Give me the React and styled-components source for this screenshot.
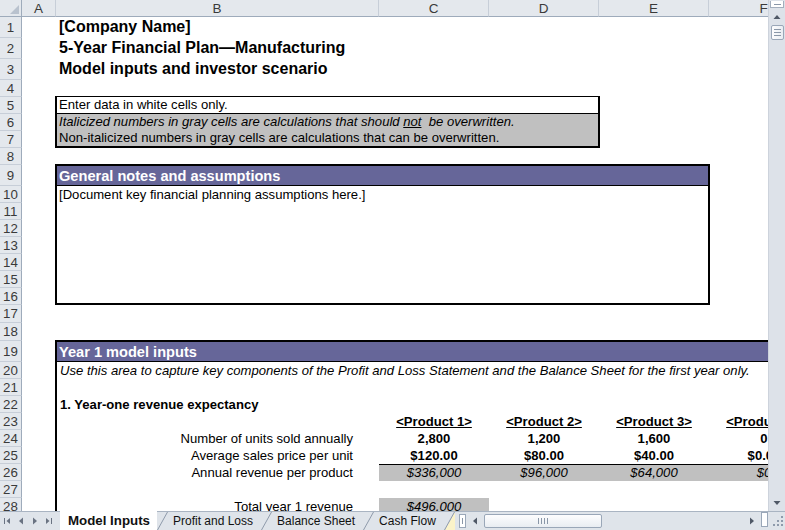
import React from "react";
import styled, { createGlobalStyle, css } from "styled-components";

const GlobalStyle = createGlobalStyle`
  html, body { margin: 0; padding: 0; background: #fff; }
  body { font-family: "Liberation Sans", Arial, sans-serif; color: #000; }
`;

// sheet geometry, taken from the screenshot
const ROW_TEMPLATE =
  "17px 21px 21px 21px repeat(5, 17px) 21px repeat(7, 17px) 18px 18px 21px repeat(9, 17px)";
const COLS = ["A", "B", "C", "D", "E", "F"];
const ROWS = Array.from({ length: 28 }, (_, i) => i + 1);
const BODY = "13.1px";

const products = [
  { name: "<Product 1>", units: "2,800", price: "$120.00", revenue: "$336,000" },
  { name: "<Product 2>", units: "1,200", price: "$80.00", revenue: "$96,000" },
  { name: "<Product 3>", units: "1,600", price: "$40.00", revenue: "$64,000" },
  { name: "<Product 4>", units: "0", price: "$0.00", revenue: "$0" },
];

const Window = styled.div`
  width: 785px;
  height: 530px;
  overflow: hidden;
  display: flex;
  flex-direction: column;
  background: #fff;
`;

const Main = styled.div`
  display: flex;
  height: 511px;
`;

const Sheet = styled.div`
  width: 768px;
  height: 511px;
  overflow: hidden;
  display: grid;
  grid-template-columns: 22px 34px 323px 110px 110px 110px 110px;
  grid-template-rows: ${ROW_TEMPLATE};
  align-content: start;
  justify-content: start;
`;

const HeadBase = css`
  background: #e4e8ed;
  color: #3a3a3a;
  font-size: 13.5px;
  display: flex;
  align-items: center;
  justify-content: center;
  box-sizing: border-box;
`;

const Corner = styled.div`
  ${HeadBase};
  grid-column: 1;
  grid-row: 1;
  border-bottom: 1px solid #9eabbb;
  border-right: 1px solid #9eabbb;
  justify-content: flex-end;
  align-items: flex-end;
  padding: 0 2px 2px 0;
`;

const ColHead = styled.div`
  ${HeadBase};
  grid-row: 1;
  grid-column: ${(p) => p.$col};
  border-bottom: 1px solid #9eabbb;
  border-right: 1px solid #c7ced8;
`;

const RowHead = styled.div`
  ${HeadBase};
  grid-column: 1;
  grid-row: ${(p) => p.$row};
  border-bottom: 1px solid #c7ced8;
  border-right: 1px solid #9eabbb;
  font-size: 13.3px;
`;

const Cell = styled.div`
  grid-column: ${(p) => p.$col};
  grid-row: ${(p) => p.$row};
  display: flex;
  align-items: flex-end;
  justify-content: ${(p) => (p.$align === "right" ? "flex-end" : p.$align === "center" ? "center" : "flex-start")};
  padding: ${(p) => (p.$align === "right" ? "0 26px 1px 0" : p.$align === "center" ? "0 0 1px" : "0 0 1px 3px")};
  font-size: ${BODY};
  font-weight: ${(p) => (p.$bold ? "bold" : "normal")};
  font-style: ${(p) => (p.$italic ? "italic" : "normal")};
  text-decoration: ${(p) => (p.$underline ? "underline" : "none")};
  background: ${(p) => (p.$gray ? "#c0c0c0" : "transparent")};
  border-top: ${(p) => (p.$ruled ? "1px solid #000" : "none")};
  white-space: nowrap;
  box-sizing: border-box;
  min-width: 0;
`;

const Title = styled(Cell)`
  font-size: 16px;
  font-weight: bold;
  padding-bottom: 2px;
`;

const InfoBox = styled.div`
  grid-column: 3 / 6;
  grid-row: 6 / 9;
  margin: -1px -1px 0 -1px;
  border: 2px solid #000;
  border-top-width: 1px;
  display: flex;
  flex-direction: column;
  font-size: ${BODY};
`;

const InfoLine = styled.div`
  flex: 1;
  display: flex;
  align-items: flex-end;
  padding: 0 0 1px 2px;
  white-space: nowrap;
  background: ${(p) => (p.$gray ? "#c0c0c0" : "#fff")};
  font-style: ${(p) => (p.$italic ? "italic" : "normal")};
  border-bottom: ${(p) => (p.$divider ? "1px solid #000" : "none")};
`;

const NotesBox = styled.div`
  grid-column: 3 / 7;
  grid-row: 10 / 18;
  margin: -1px -1px 0 -1px;
  border: 2px solid #000;
  display: flex;
  flex-direction: column;
`;

const SectionBar = styled.div`
  height: 20px;
  flex: none;
  box-sizing: border-box;
  background: #666699;
  color: #fff;
  font-weight: bold;
  font-size: 14.6px;
  display: flex;
  align-items: center;
  padding: 0 0 0 2px;
  border-bottom: 1px solid #000;
  white-space: nowrap;
  grid-column: 1 / -1;
  grid-row: 1;
`;

const NotesBody = styled.div`
  flex: 1;
  font-size: ${BODY};
  padding: 1px 0 0 2px;
`;

const Year1Box = styled.div`
  grid-column: 3 / 8;
  grid-row: 20 / 30;
  margin: -1px 0 0 -1px;
  border-top: 2px solid #000;
  border-left: 2px solid #000;
  display: grid;
  grid-template-columns: 322px 110px 110px 110px 110px;
  grid-template-rows: 20px repeat(9, 17px);
  align-content: start;
`;

/* ---------- scrollbars ---------- */

const VScroll = styled.div`
  width: 17px;
  height: 511px;
  background: #dde2e9;
  border-left: 1px solid #cdd3dc;
  box-sizing: border-box;
  display: flex;
  flex-direction: column;
  align-items: center;
`;

const SplitTop = styled.div`
  width: 12px;
  height: 6px;
  margin-top: 1px;
  background: #fff;
  border: 1px solid #a3aebd;
  border-top: none;
  display: flex;
  align-items: center;
  justify-content: center;
`;

const ArrowBtn = styled.div`
  width: ${(p) => p.$w || 16}px;
  height: ${(p) => p.$h || 16}px;
  flex: none;
  display: flex;
  align-items: center;
  justify-content: center;
`;

const VThumb = styled.div`
  width: 13px;
  height: 15px;
  box-sizing: border-box;
  border: 1px solid #9aa7b8;
  border-radius: 2px;
  background: linear-gradient(90deg, #fdfdfe, #e9edf2);
  display: flex;
  flex-direction: column;
  justify-content: center;
  align-items: center;
  gap: 2px;
`;

const GripLine = styled.span`
  display: block;
  width: ${(p) => (p.$vertical ? "1px" : "7px")};
  height: ${(p) => (p.$vertical ? "6px" : "1px")};
  background: #8a97a8;
`;

const Track = styled.div`
  flex: 1;
`;

/* ---------- tab strip ---------- */

const TabBar = styled.div`
  height: 19px;
  display: flex;
  align-items: stretch;
  background: #dfe4ea;
  border-top: 1px solid #a9b4c2;
  box-sizing: border-box;
  font-size: 12px;
`;

const NavArrows = styled.div`
  width: 60px;
  flex: none;
  display: flex;
  align-items: center;
  justify-content: space-around;
  padding: 0 4px 0 0;
  box-sizing: border-box;
`;

const Tab = styled.div`
  display: flex;
  align-items: center;
  padding: ${(p) => (p.$active ? "0 7px 0 8px" : "0 8px 0 5px")};
  background: ${(p) => (p.$active ? "#fff" : "transparent")};
  font-weight: ${(p) => (p.$active ? "bold" : "normal")};
  font-size: ${(p) => (p.$active ? "13.3px" : "12px")};
  margin-top: ${(p) => (p.$active ? "-1px" : "0")};
  white-space: nowrap;
  color: #111;
`;

const Splitter = styled.div`
  width: 5px;
  margin: 2px 3px 2px 4px;
  background: #fff;
  border: 1px solid #9aa7b8;
  display: flex;
  align-items: center;
  justify-content: center;
`;

const HScroll = styled.div`
  flex: 1;
  display: flex;
  align-items: center;
`;

const HThumb = styled.div`
  width: 118px;
  height: 14px;
  margin-left: 3px;
  box-sizing: border-box;
  border: 1px solid #9aa7b8;
  border-radius: 2px;
  background: linear-gradient(#fdfdfe, #e9edf2);
  display: flex;
  align-items: center;
  justify-content: center;
  gap: 2px;
`;

const SplitRight = styled.div`
  width: 5px;
  height: 13px;
  margin: 0 2px 0 2px;
  background: #fff;
  border: 1px solid #9aa7b8;
`;

const Grip = styled.div`
  width: 15px;
  flex: none;
  display: flex;
  align-items: center;
  justify-content: center;
`;

const Tri = ({ dir, size = 8, color = "#4f5866" }) => {
  const pts = {
    up: "0.5,6 4,2 7.5,6",
    down: "0.5,2 4,6 7.5,2",
    left: "6,0.5 2,4 6,7.5",
    right: "2,0.5 6,4 2,7.5",
  };
  return (
    <svg width={size} height={size} viewBox="0 0 8 8">
      <polygon points={pts[dir]} fill={color} />
    </svg>
  );
};

const EndArrow = ({ dir }) => (
  <svg width="8" height="8" viewBox="0 0 8 8">
    {dir === "left" ? (
      <>
        <rect x="1" y="1" width="1" height="6" fill="#6a7382" />
        <polygon points="7,1 3.5,4 7,7" fill="#6a7382" />
      </>
    ) : (
      <>
        <rect x="6" y="1" width="1" height="6" fill="#6a7382" />
        <polygon points="1,1 4.5,4 1,7" fill="#6a7382" />
      </>
    )}
  </svg>
);

const TabSep = ({ fill }) => (
  <svg width="11" height="18" viewBox="0 0 11 18" style={{ flex: "none" }}>
    {fill && <polygon points="1,18 11,0 15,0 15,18" fill={fill} />}
    <line x1="0.5" y1="18" x2="10.5" y2="0" stroke="#8e9aab" strokeWidth="1" />
  </svg>
);

const CornerMark = () => (
  <svg width="9" height="9" viewBox="0 0 9 9">
    <polygon points="9,0 9,9 0,9" fill="#b9c2ce" />
  </svg>
);

const GripDots = () => (
  <svg width="12" height="12" viewBox="0 0 12 12">
    {[
      [9, 1],
      [9, 5],
      [5, 5],
      [9, 9],
      [5, 9],
      [1, 9],
    ].map(([x, y]) => (
      <rect key={`${x}-${y}`} x={x} y={y} width="2" height="2" fill="#8e9aab" />
    ))}
  </svg>
);

export default function App() {
  return (
    <>
      <GlobalStyle />
      <Window>
        <Main>
          <Sheet>
            <Corner>
              <CornerMark />
            </Corner>
            {COLS.map((c, i) => (
              <ColHead key={c} $col={i + 2}>
                {c}
              </ColHead>
            ))}
            {ROWS.map((r) => (
              <RowHead key={r} $row={r + 1}>
                {r}
              </RowHead>
            ))}

            <Title $col={3} $row={2}>[Company Name]</Title>
            <Title $col={3} $row={3}>5-Year Financial Plan—Manufacturing</Title>
            <Title $col={3} $row={4}>Model inputs and investor scenario</Title>

            <InfoBox>
              <InfoLine $divider>Enter data in white cells only.</InfoLine>
              <InfoLine $gray $italic>
                Italicized numbers in gray cells are calculations that should&nbsp;<u>not</u>&nbsp; be overwritten.
              </InfoLine>
              <InfoLine $gray>Non-italicized numbers in gray cells are calculations that can be overwritten.</InfoLine>
            </InfoBox>

            <NotesBox>
              <SectionBar>General notes and assumptions</SectionBar>
              <NotesBody>[Document key financial planning assumptions here.]</NotesBody>
            </NotesBox>

            <Year1Box>
              <SectionBar>Year 1 model inputs</SectionBar>
              <Cell $col="1 / -1" $row={2} $italic>
                Use this area to capture key components of the Profit and Loss Statement and the Balance Sheet for the
                first year only.
              </Cell>
              <Cell $col="1 / -1" $row={4} $bold>
                1. Year-one revenue expectancy
              </Cell>

              <Cell $col={1} $row={6} $align="right">Number of units sold annually</Cell>
              <Cell $col={1} $row={7} $align="right">Average sales price per unit</Cell>
              <Cell $col={1} $row={8} $align="right">Annual revenue per product</Cell>

              {products.map((p, i) => (
                <React.Fragment key={p.name}>
                  <Cell $col={i + 2} $row={5} $align="center" $bold $underline>
                    {p.name}
                  </Cell>
                  <Cell $col={i + 2} $row={6} $align="center" $bold>
                    {p.units}
                  </Cell>
                  <Cell $col={i + 2} $row={7} $align="center" $bold>
                    {p.price}
                  </Cell>
                  <Cell $col={i + 2} $row={8} $align="center" $italic $gray $ruled>
                    {p.revenue}
                  </Cell>
                </React.Fragment>
              ))}

              <Cell $col={1} $row={10} $align="right">Total year 1 revenue</Cell>
              <Cell $col={2} $row={10} $align="center" $italic $gray>
                $496,000
              </Cell>
            </Year1Box>
          </Sheet>

          <VScroll>
            <SplitTop>
              <GripLine />
            </SplitTop>
            <ArrowBtn $h={17}>
              <Tri dir="up" />
            </ArrowBtn>
            <VThumb>
              <GripLine />
              <GripLine />
              <GripLine />
            </VThumb>
            <Track />
            <ArrowBtn $h={16}>
              <Tri dir="down" />
            </ArrowBtn>
          </VScroll>
        </Main>

        <TabBar>
          <NavArrows>
            <EndArrow dir="left" />
            <Tri dir="left" color="#6a7382" />
            <Tri dir="right" color="#6a7382" />
            <EndArrow dir="right" />
          </NavArrows>
          <Tab $active>Model Inputs</Tab>
          <TabSep />
          <Tab>Profit and Loss</Tab>
          <TabSep />
          <Tab>Balance Sheet</Tab>
          <TabSep />
          <Tab>Cash Flow</Tab>
          <TabSep fill="#fbf3c9" />
          <Splitter>
            <GripLine $vertical />
          </Splitter>
          <HScroll>
            <ArrowBtn $w={12} $h={17}>
              <Tri dir="left" />
            </ArrowBtn>
            <HThumb>
              <GripLine $vertical />
              <GripLine $vertical />
              <GripLine $vertical />
              <GripLine $vertical />
            </HThumb>
            <Track />
            <ArrowBtn $w={14} $h={17}>
              <Tri dir="right" />
            </ArrowBtn>
          </HScroll>
          <SplitRight />
          <Grip>
            <GripDots />
          </Grip>
        </TabBar>
      </Window>
    </>
  );
}
